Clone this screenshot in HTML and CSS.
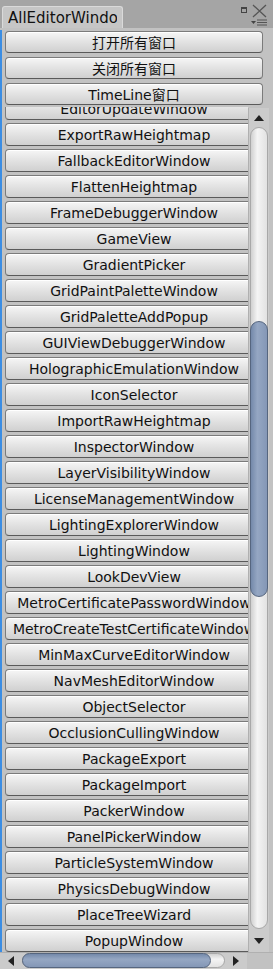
FILE: index.html
```html
<!DOCTYPE html>
<html lang="zh">
<head>
    <meta charset="UTF-8">
    <title>AllEditorWindow</title>
    <link rel="stylesheet" href="styles.css">
</head>
<body>
    <div class="window">
        <div class="titlebar">
            <div class="tab"><span class="tab-label">AllEditorWindow</span></div>
            <div class="controls">
                <span class="max-icon"></span>
                <svg class="close-icon" width="15" height="14" viewBox="0 0 15 14">
                    <path d="M1 1 L14 13 M14 1 L1 13" stroke="#555" stroke-width="1.3" fill="none"/>
                </svg>
                <svg class="menu-icon" width="16" height="7" viewBox="0 0 16 7">
                    <path d="M0 2 L5 2 L2.5 5 Z" fill="#444"/>
                    <path d="M6 1 H16 M6 3.5 H16 M6 6 H16" stroke="#555" stroke-width="1.2"/>
                </svg>
            </div>
        </div>

        <div class="panel">
            <div class="frame">
                <div class="actions">
                    <button class="btn">打开所有窗口</button>
                    <button class="btn">关闭所有窗口</button>
                    <button class="btn">TimeLine窗口</button>
                </div>

                <div class="scroll">
                    <div class="list">
                        <button class="btn">EditorUpdateWindow</button>
                        <button class="btn">ExportRawHeightmap</button>
                        <button class="btn">FallbackEditorWindow</button>
                        <button class="btn">FlattenHeightmap</button>
                        <button class="btn">FrameDebuggerWindow</button>
                        <button class="btn">GameView</button>
                        <button class="btn">GradientPicker</button>
                        <button class="btn">GridPaintPaletteWindow</button>
                        <button class="btn">GridPaletteAddPopup</button>
                        <button class="btn">GUIViewDebuggerWindow</button>
                        <button class="btn">HolographicEmulationWindow</button>
                        <button class="btn">IconSelector</button>
                        <button class="btn">ImportRawHeightmap</button>
                        <button class="btn">InspectorWindow</button>
                        <button class="btn">LayerVisibilityWindow</button>
                        <button class="btn">LicenseManagementWindow</button>
                        <button class="btn">LightingExplorerWindow</button>
                        <button class="btn">LightingWindow</button>
                        <button class="btn">LookDevView</button>
                        <button class="btn">MetroCertificatePasswordWindow</button>
                        <button class="btn">MetroCreateTestCertificateWindow</button>
                        <button class="btn">MinMaxCurveEditorWindow</button>
                        <button class="btn">NavMeshEditorWindow</button>
                        <button class="btn">ObjectSelector</button>
                        <button class="btn">OcclusionCullingWindow</button>
                        <button class="btn">PackageExport</button>
                        <button class="btn">PackageImport</button>
                        <button class="btn">PackerWindow</button>
                        <button class="btn">PanelPickerWindow</button>
                        <button class="btn">ParticleSystemWindow</button>
                        <button class="btn">PhysicsDebugWindow</button>
                        <button class="btn">PlaceTreeWizard</button>
                        <button class="btn">PopupWindow</button>
                        <button class="btn">PreferencesWindow</button>
                    </div>

                    <div class="vbar">
                        <div class="arrow-box"><span class="arrow-up"></span></div>
                        <div class="vtrack">
                            <div class="vthumb"></div>
                        </div>
                        <div class="arrow-box bottom"><span class="arrow-down"></span></div>
                    </div>
                </div>
            </div>

            <div class="hbar">
                <div class="harrow"><span class="arrow-left"></span></div>
                <div class="htrack">
                    <div class="hthumb"></div>
                </div>
                <div class="harrow"><span class="arrow-right"></span></div>
                <div class="corner"></div>
            </div>
        </div>
    </div>
</body>
</html>
```

FILE: styles.css
```css
body {
    margin: 0;
    background-color: #a5a5a5;
    font-family: "DejaVu Sans", "Noto Sans CJK SC", sans-serif;
    font-size: 14px;
    color: #111;
}

.window {
    width: 273px;
    height: 969px;
    display: flex;
    flex-direction: column;
    overflow: hidden;
}

/* title bar with the single tab */
.titlebar {
    height: 28px;
    display: flex;
    justify-content: space-between;
    flex-shrink: 0;
}

.tab {
    margin-top: 6px;
    margin-left: 2px;
    width: 121px;
    height: 22px;
    padding-left: 5px;
    box-sizing: border-box;
    background-color: #c6c6c6;
    border: 1px solid #dadada;
    border-bottom: none;
    border-radius: 3px 3px 0 0;
    white-space: nowrap;
}

.tab-label {
    display: block;
    width: 109px;
    overflow: hidden;
    line-height: 22px;
    font-size: 15px;
}

.controls {
    position: relative;
    width: 40px;
}

.max-icon {
    position: absolute;
    left: 8px;
    top: 7px;
    width: 4px;
    height: 3px;
    border: 1px solid #444;
    border-top-width: 2px;
}

.close-icon {
    position: absolute;
    left: 19px;
    top: 4px;
}

.menu-icon {
    position: absolute;
    left: 18px;
    top: 19px;
}

.panel {
    flex: 1;
    min-height: 0;
    display: flex;
    flex-direction: column;
    background-color: #c2c2c2;
}

.frame {
    flex: 1;
    margin-top: 2px;
    border-left: 2px solid #3b8de3;
    display: flex;
    flex-direction: column;
    min-height: 0;
}

.actions {
    padding: 1px 10px 0 3px;
    display: flex;
    flex-direction: column;
    gap: 4px;
}

.btn {
    display: block;
    width: 258px;
    height: 22px;
    flex-shrink: 0;
    padding: 0;
    font-family: "DejaVu Sans", "Noto Sans CJK SC", sans-serif;
    font-size: 14px;
    color: #111;
    text-align: center;
    white-space: nowrap;
    overflow: hidden;
    background: linear-gradient(#f6f6f6, #e4e4e4 45%, #d0d0d0);
    border: 1px solid #7b7b7b;
    border-bottom-color: #5a5a5a;
    border-radius: 4px;
    box-shadow: inset 0 1px 0 #ffffff;
}

.scroll {
    flex: 1;
    margin-top: 2px;
    display: flex;
    min-height: 0;
}

.list {
    flex: 1;
    overflow: hidden;
    padding-left: 3px;
    display: flex;
    flex-direction: column;
    gap: 3px;
}

.list .btn {
    height: 23px;
}

.list .btn:first-child {
    margin-top: -10px;
}

/* vertical scrollbar */
.vbar {
    width: 20px;
    margin-right: 4px;
    margin-top: 1px;
    display: flex;
    flex-direction: column;
    background-color: #cbcbcb;
    border-left: 1px solid #b0b0b0;
}

.arrow-box {
    height: 19px;
    flex-shrink: 0;
    display: flex;
    justify-content: center;
    align-items: center;
}

.arrow-box.bottom {
    height: 23px;
}

.arrow-up {
    width: 0;
    height: 0;
    border-left: 5px solid transparent;
    border-right: 5px solid transparent;
    border-bottom: 6px solid #222;
}

.arrow-down {
    width: 0;
    height: 0;
    border-left: 5px solid transparent;
    border-right: 5px solid transparent;
    border-top: 6px solid #222;
}

.vtrack {
    flex: 1;
    margin: 0 1px;
    padding-top: 193px;
    border: 1px solid #a8a8a8;
    border-radius: 10px;
    background: linear-gradient(90deg, #d0d0d0, #f4f4f4 40%, #e2e2e2);
}

.vthumb {
    height: 274px;
    margin: 0 -1px;
    border: 1px solid #56667f;
    border-radius: 10px;
    background: linear-gradient(90deg, #7489aa, #95a7c3 40%, #8497b6);
}

/* horizontal scrollbar */
.hbar {
    height: 16px;
    flex-shrink: 0;
    display: flex;
    background-color: #cbcbcb;
    border-top: 1px solid #b0b0b0;
}

.harrow {
    width: 22px;
    display: flex;
    justify-content: center;
    align-items: center;
}

.arrow-left {
    width: 0;
    height: 0;
    border-top: 5px solid transparent;
    border-bottom: 5px solid transparent;
    border-right: 6px solid #222;
}

.arrow-right {
    width: 0;
    height: 0;
    border-top: 5px solid transparent;
    border-bottom: 5px solid transparent;
    border-left: 6px solid #222;
}

.htrack {
    width: 203px;
    margin: 0 0 1px;
    padding-right: 13px;
    box-sizing: border-box;
    border: 1px solid #a8a8a8;
    border-radius: 8px;
    background: linear-gradient(#d0d0d0, #f4f4f4 40%, #e2e2e2);
    display: flex;
}

.hthumb {
    flex: 1;
    margin: -1px 0 -1px -1px;
    border: 1px solid #56667f;
    border-radius: 8px;
    background: linear-gradient(#7489aa, #95a7c3 40%, #8497b6);
}

.corner {
    flex: 1;
    background-color: #c2c2c2;
}
```
